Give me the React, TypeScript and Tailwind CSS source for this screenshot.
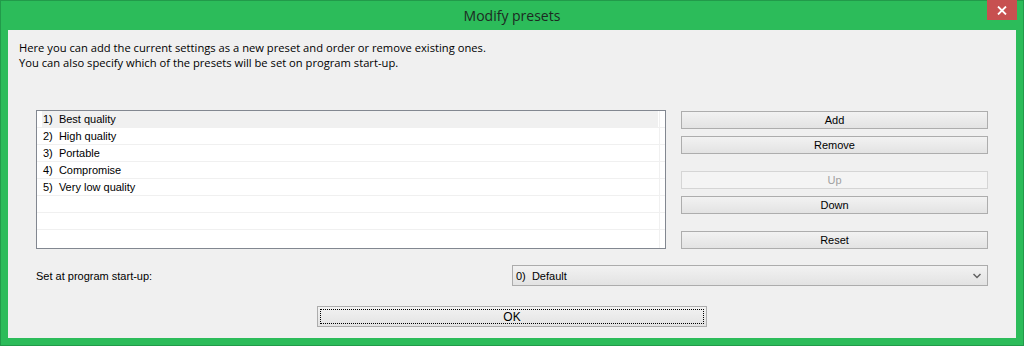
import React from "react";

const presets = ["Best quality", "High quality", "Portable", "Compromise", "Very low quality"];

function WinButton({ label, disabled = false, className = "" }: { label: string; disabled?: boolean; className?: string }) {
  return (
    <div
      className={
        "h-[18px] flex items-center justify-center border text-[11px] leading-none " +
        (disabled
          ? "border-[#d5d5d5] bg-[#f4f4f4] text-[#a0a0a0] "
          : "border-[#adadad] bg-gradient-to-b from-[#f2f2f2] to-[#e3e3e3] text-black ") +
        className
      }
    >
      {label}
    </div>
  );
}

export default function App() {
  return (
    <div
      className="w-[1024px] h-[346px] bg-[#2cbc5a] border border-[#229a4a] flex flex-col"
      style={{ fontFamily: '"Liberation Sans", Arial, sans-serif' }}
    >
      {/* title bar */}
      <div className="relative h-[29px] flex items-center justify-center">
        <span
          className="text-[14px] text-[#1d2a22] pb-[1px]"
          style={{ fontFamily: '"Open Sans", "Noto Sans", sans-serif' }}
        >
          Modify presets
        </span>
        <div className="absolute right-[6px] top-[-1px] w-[30px] h-[20px] bg-[#c75050] flex items-center justify-center">
          <svg width="10" height="9" viewBox="0 0 10 9">
            <path d="M1 0.5 L9 8.5 M9 0.5 L1 8.5" stroke="white" strokeWidth="1.8" />
          </svg>
        </div>
      </div>

      {/* content */}
      <div className="mx-[7px] h-[308px] bg-[#f0f0f0] flex flex-col">
        <div
          className="pt-[10px] pl-[11px] text-[11.2px] leading-[15px] text-black"
          style={{ fontFamily: '"Open Sans", "Noto Sans", sans-serif' }}
        >
          <p>Here you can add the current settings as a new preset and order or remove existing ones.</p>
          <p>You can also specify which of the presets will be set on program start-up.</p>
        </div>

        <div className="mt-[40px] pl-[28px] pr-[28px] flex gap-[15px]">
          {/* list */}
          <div className="w-[630px] h-[139px] border border-[#828790] bg-white overflow-hidden relative">
            <div className="flex flex-col">
              {[0, 1, 2, 3, 4, 5, 6].map((i) => (
                <div key={i} className="h-[17px] border-b border-[#f0f0f0] flex">
                  {i === 0 ? (
                    <div className="ml-[5px] w-[616px] h-full bg-[#f0f0f0] flex items-center text-[11px] text-black pl-[1px]">
                      1)&nbsp;&nbsp;{presets[0]}
                    </div>
                  ) : (
                    <div className="w-[622px] h-full flex items-center text-[11px] text-black pl-[6px]">
                      {i < presets.length ? `${i + 1})\u00a0\u00a0${presets[i]}` : ""}
                    </div>
                  )}
                </div>
              ))}
            </div>
            <div className="absolute top-0 bottom-0 left-[622px] w-px bg-[#f0f0f0]" />
          </div>

          {/* buttons */}
          <div className="flex-1 flex flex-col pt-[1px]">
            <WinButton label="Add" />
            <WinButton label="Remove" className="mt-[7px]" />
            <WinButton label="Up" disabled className="mt-[17px]" />
            <WinButton label="Down" className="mt-[7px]" />
            <WinButton label="Reset" className="mt-[17px]" />
          </div>
        </div>

        <div className="mt-[16px] pl-[28px] pr-[28px] flex items-center">
          <span className="flex-1 text-[11px] text-black pt-[2px]">Set at program start-up:</span>
          <div className="w-[476px] h-[21px] border border-[#acacac] bg-gradient-to-b from-[#f2f2f2] to-[#e3e3e3] flex items-center pl-[3px] pr-[6px]">
            <span className="flex-1 text-[11px] text-black pt-[1px]">0)&nbsp;&nbsp;Default</span>
            <svg width="8" height="6" viewBox="0 0 8 6">
              <path d="M0.5 1 L4 4.5 L7.5 1" stroke="#606060" strokeWidth="1.5" fill="none" />
            </svg>
          </div>
        </div>

        <div className="mt-[20px] flex justify-center">
          <div className="w-[390px] h-[21px] border border-[#adadad] bg-gradient-to-b from-[#f2f2f2] to-[#e3e3e3] p-[2px]">
            <div className="h-full border border-dotted border-black flex items-center justify-center text-[12px] text-black">
              OK
            </div>
          </div>
        </div>
      </div>
    </div>
  );
}
